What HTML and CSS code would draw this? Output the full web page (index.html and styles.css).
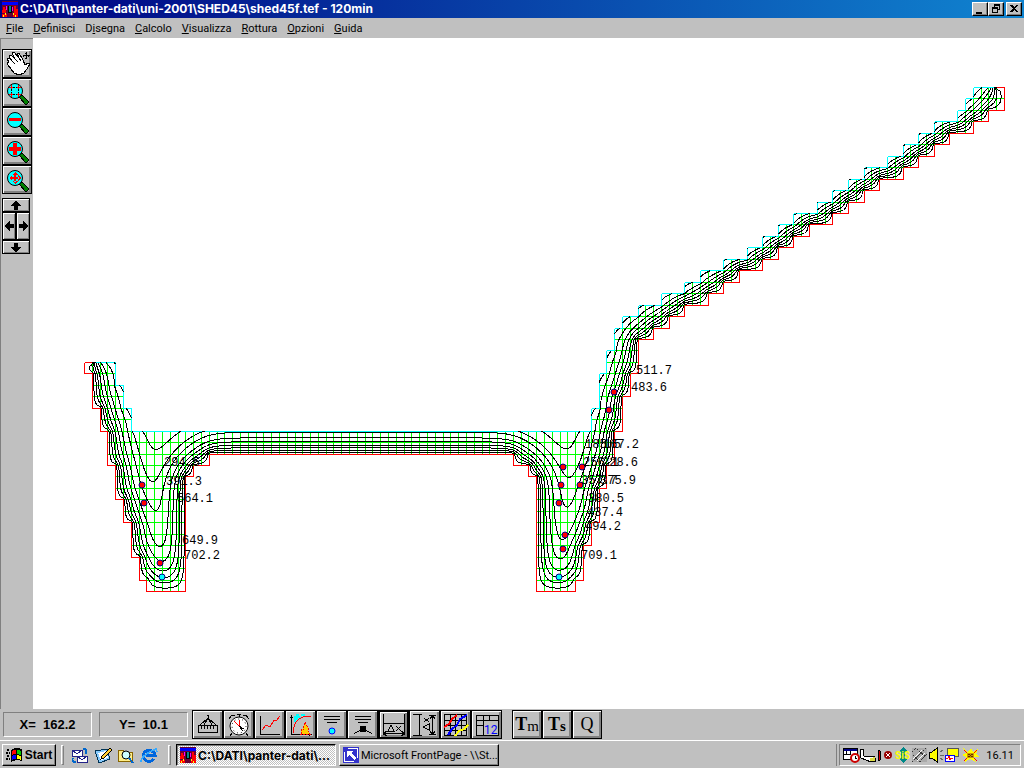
FILE: index.html
```html
<!DOCTYPE html>
<html lang="it">
<head>
  <meta charset="UTF-8">
  <title>shed45f.tef - 120min</title>
  <link rel="stylesheet" href="styles.css">
</head>
<body>

  <header class="titlebar">
    <svg class="app-icon" width="16" height="16" viewBox="0 0 16 16"><use href="#panter"/></svg>
    <h1>C:\DATI\panter-dati\uni-2001\SHED45\shed45f.tef - 120min</h1>
    <button class="win-btn" aria-label="Riduci"><svg width="14" height="12"><path d="M3 9h6v2H3z"/></svg></button>
    <button class="win-btn" aria-label="Ripristina"><svg width="14" height="12"><path d="M5 1h6v6H9V6h1V3H6v1H5zM3 4h6v6H3zM4 6v3h4V6z" fill-rule="evenodd"/></svg></button>
    <button class="win-btn close" aria-label="Chiudi"><svg width="14" height="12"><path d="M3 2h2l2 2 2-2h2L8 5.500 11 9H9L7 7 5 9H3l3-3.500z"/></svg></button>
  </header>

  <nav class="menubar">
    <a href="#"><u>F</u>ile</a>
    <a href="#"><u>D</u>efinisci</a>
    <a href="#">D<u>i</u>segna</a>
    <a href="#"><u>C</u>alcolo</a>
    <a href="#"><u>V</u>isualizza</a>
    <a href="#"><u>R</u>ottura</a>
    <a href="#"><u>O</u>pzioni</a>
    <a href="#"><u>G</u>uida</a>
  </nav>

  <main class="work">
    <aside class="tools">
      <button class="tool" aria-label="Sposta"><svg width="26" height="25" viewBox="0 0 26 25">
        <path d="M5 11L3 8l2-1 3 3-3-5 2-1 4 4-3-6 2-1 5 6-2-5 2 0 4 7 2 5 3-2 2 1-3 5-3 4-5 2-5-2-6-8-1-2z" fill="#fff" stroke="#000"/>
        <path d="M8 10l3 3M11 8l3 3M15 7l2 3" stroke="#000" fill="none"/>
        <path d="M22 1v7M18.500 4.500h7M21 2h2M21 7h2M19.500 3.500v2M24.500 3.500v2" stroke="#000"/></svg></button>
      <button class="tool" aria-label="Zoom finestra"><svg width="26" height="25" viewBox="0 0 26 25"><use href="#lens"/>
        <path d="M7.500 6v10M14.500 6v10M6 7.500h10M6 14.500h10" stroke="#000" stroke-dasharray="2 1"/><path d="M5 7.500h4M7.500 5v4M13 7.500h4M14.500 5v4M5 14.500h4M7.500 13v4M13 14.500h4M14.500 13v4" stroke="#f00"/></svg></button>
      <button class="tool" aria-label="Zoom meno"><svg width="26" height="25" viewBox="0 0 26 25"><use href="#lens"/><path d="M5 9h12v3H5z" fill="#f00"/></svg></button>
      <button class="tool" aria-label="Zoom piu"><svg width="26" height="25" viewBox="0 0 26 25"><use href="#lens"/><path d="M9 5h4v4h4v4h-4v4H9v-4H5V9h4z" fill="#f00"/></svg></button>
      <button class="tool" aria-label="Zoom tutto"><svg width="26" height="25" viewBox="0 0 26 25"><use href="#lens"/>
        <path d="M11 5l3 3H8zM11 17l3-3H8zM5 11l3-3v6zM17 11l-3-3v6zM10 7h2v3h3v2h-3v3h-2v-3H7v-2h3z" fill="#f00"/></svg></button>
      <div class="pad">
        <button class="wide" aria-label="Su"><svg width="12" height="9"><path d="M6 0l6 5H8v4H4V5H0z"/></svg></button>
        <button aria-label="Sinistra"><svg width="9" height="12"><path d="M0 6l5-6v4h4v4H5v4z"/></svg></button>
        <button aria-label="Destra"><svg width="9" height="12"><path d="M9 6L4 0v4H0v4h4v4z"/></svg></button>
        <button class="wide" aria-label="Giu"><svg width="12" height="9"><path d="M6 9L0 4h4V0h4v4h4z"/></svg></button>
      </div>
    </aside>
    <section class="sheet">
      <svg id="section" viewBox="33 38 991 671" preserveAspectRatio="xMinYMin meet">
        <path id="mesh" class="mesh"/>
        <path id="cold" class="cold"/>
        <path id="hot" class="hot"/>
        <path id="iso" class="iso"/>
        <g id="probes" class="probes"></g>
        <g id="labels" class="labels"></g>
      </svg>
    </section>
  </main>

  <footer class="status">
    <output class="coord">X=  162.2</output>
    <output class="coord">Y=  10.1</output>
    <div class="group">
      <button aria-label="Sezione"><svg width="24" height="24" viewBox="0 0 24 24"><path d="M2.500 12.500h19v7h-19zM4 12l8-7 8 7M12 2v3M8 12l4-7 4 7M11 2.500h2" class="ln"/><path d="M5.500 13v3M8.500 13v3M11.500 13v3M14.500 13v3M17.500 13v3" class="ln"/></svg></button>
      <button aria-label="Tempo"><svg width="24" height="24" viewBox="0 0 24 24"><path d="M2 6l3-4 3 1M22 6l-3-4-3 1M10 1.500h4M12 2v3M5 20l-2 3M19 20l2 3" class="ln"/><circle cx="12" cy="13" r="9" fill="#fff" stroke="#000"/><circle cx="12" cy="13" r="7" fill="none" stroke="#000" stroke-dasharray="1 3"/><path d="M7 8l5 5M12 7v6" stroke="#f00"/><path d="M12 13l4 5M12 13l5 3" class="ln"/></svg></button>
      <button aria-label="Grafico"><svg width="24" height="24" viewBox="0 0 24 24"><path d="M2.500 3v18.500H22" class="ln"/><path d="M4 17l4-5 4 2 4-7 2 1 4-5" fill="none" stroke="#f00"/></svg></button>
      <button aria-label="Curve"><svg width="24" height="24" viewBox="0 0 24 24"><path d="M2.500 2v19.500H23M1 4h3M20.500 20v3" class="ln"/><path d="M5 4h6M7 2h3M12 2h4M5 6h4M5 8h2M10 5h2" stroke="#0ff" stroke-width="2"/><path d="M4 20c1-12 6-17 18-17" fill="none" stroke="#f00"/><path d="M12 21l1-5 1 1 2-8 3 6 0 3 2 3z" fill="#fc0" stroke="#f00" stroke-dasharray="2 1"/></svg></button>
      <button aria-label="Punto"><svg width="24" height="24" viewBox="0 0 24 24"><path d="M4 3.500h16M4 6.500h16M7 9.500h10" class="ln"/><circle cx="12" cy="18" r="3" fill="#0ff" stroke="#00f"/></svg></button>
      <button aria-label="Nodo"><svg width="24" height="24" viewBox="0 0 24 24"><path d="M4 3.500h16M4 6.500h16M7 9.500h10M3 20.500l6-3M21 20.500l-6-3" class="ln"/><path d="M9 13h6v6H9z"/></svg></button>
      <button class="on" aria-label="Delta x"><svg width="24" height="24" viewBox="0 0 24 24"><path d="M1.500 1v21M22.500 1v21M1 10.500h22M2 20.500h20M2 20l3-2M2 21l3 2M22 20l-3-2M22 21l-3 2M6 18l3-6 3 6zM14 13l5 5M19 13l-5 5" class="ln"/></svg></button>
      <button aria-label="Delta y"><svg width="24" height="24" viewBox="0 0 24 24"><path d="M0 1.500h9M0 22.500h9M6.500 2v20M19.500 2v20M16 2.500h7M16 21.500h7M19 3l-2 3M20 3l2 3M19 21l-2-3M20 21l2-3M10 14l6-3v6zM11 5l5 4M16 5l-5 4" class="ln"/></svg></button>
      <button aria-label="Isoterme"><svg width="26" height="24" viewBox="0 0 26 24"><path d="M1.500 1.500h22v21h-22zM7.500 2v20M12.500 2v20M18.500 2v20M2 7.500h22M2 12.500h22M2 17.500h22" class="ln"/><path d="M1 14l5-3 3-5 5-4" fill="none" stroke="#f00" stroke-width="2"/><path d="M5 22l4-6 5-4 3-6 7-4" fill="none" stroke="#00f" stroke-width="2"/><path d="M12 23l4-5 5-2 4-4" fill="none" stroke="#ff0" stroke-width="2"/></svg></button>
      <button aria-label="Tabella"><svg width="24" height="24" viewBox="0 0 24 24"><path d="M1.500 2.500h22v20h-22zM8.500 3v20M2 7.500h22M14.500 3v5M2 12.500h7" class="ln"/><text x="9" y="21" class="num">12</text></svg></button>
    </div>
    <div class="group letters">
      <button><b>T</b><span>m</span></button>
      <button><b>T</b><b class="sub">s</b></button>
      <button>Q</button>
    </div>
  </footer>

  <div class="taskbar">
    <button class="start"><svg width="17" height="16" viewBox="0 0 17 16">
      <path d="M1 3h3M0 6h4M1 9h3M0 12h4" stroke="#000" stroke-width="2" stroke-dasharray="2 1"/>
      <path d="M5 3q3-3 11-1v12q-6-2-11 1z"/><path d="M6 4q2-1 4-1v4q-2 0-4 1z" fill="#f00"/><path d="M11 3q2 0 4 1v4l-4-1z" fill="#0c0"/><path d="M6 9q2-1 4-1v4q-2 0-4 1z" fill="#00f"/><path d="M11 8l4 1v4q-2-1-4-1z" fill="#ff0"/></svg>Start</button>
    <i class="grip"></i>
    <div class="quick">
      <a href="#" aria-label="Posta"><svg width="18" height="17" viewBox="0 0 18 17"><path d="M1 3h10v6H1zM6 9h10v6H6z" fill="#fff" stroke="#228"/><path d="M1 3l5 4 5-4M6 9l5 4 5-4" fill="none" stroke="#228"/><path d="M12 2q5 0 3 5M5 15q-5 0-3-4" fill="none" stroke="#06c" stroke-width="2"/></svg></a>
      <a href="#" aria-label="Desktop"><svg width="18" height="17" viewBox="0 0 18 17"><path d="M1 4l12-2 3 10-11 4z" fill="#8cf" stroke="#035"/><path d="M4 6l8-2 2 7-7 2z" fill="#fff"/><path d="M16 1l-8 8-1 3 3-1 8-8z" fill="#fc3" stroke="#000"/></svg></a>
      <a href="#" aria-label="Cerca"><svg width="18" height="17" viewBox="0 0 18 17"><path d="M1 3h5l1 2h8v9H1z" fill="#fe8" stroke="#860"/><circle cx="9" cy="8" r="4" fill="#cff" stroke="#000"/><path d="M12 11l4 5" stroke="#06c" stroke-width="2"/></svg></a>
      <a href="#" aria-label="Internet"><svg width="18" height="17" viewBox="0 0 18 17"><path d="M14 12a6 5.500 0 1 1 1-4H6" fill="none" stroke="#06d" stroke-width="3"/><path d="M1 15q0-7 15-13l1 3" fill="none" stroke="#3af" stroke-width="1.500"/></svg></a>
    </div>
    <i class="grip"></i>
    <button class="task active"><svg width="16" height="16" viewBox="0 0 16 16"><use href="#panter"/></svg><span>C:\DATI\panter-dati\...</span></button>
    <button class="task"><svg width="16" height="16" viewBox="0 0 16 16"><path d="M0 0h16v16H0z" fill="#33c"/><path d="M5 1.500h9.500V11M11 14.500H1.500V5" fill="none" stroke="#fff"/><path d="M4 4h6L8 6l5 5-2 2-5-5-2 2z" fill="#fff"/></svg><span>Microsoft FrontPage - \\St...</span></button>
    <i class="tray-line"></i>
    <div class="tray">
      <svg width="138" height="16" viewBox="0 0 138 16">
        <path d="M.5 1.500h14v11H.5z" fill="#fff" stroke="#000"/><path d="M1 2h13v2H1z" fill="#008"/><path d="M3 4v4M7 4v4M1 7h6" stroke="#000"/><circle cx="12" cy="11" r="4" fill="#fff" stroke="#c00" stroke-width="2"/><path d="M12 9v2h2" class="ln"/>
        <path d="M17 2l3 0 1 7 10 0 2 5-5 1-10-4z" fill="#fff" stroke="#000"/><path d="M27 11l5-1v4h-5z" fill="#dd4"/><path d="M35 3l2 1v9l-2 1z" fill="#c00" stroke="#000"/>
        <circle cx="45" cy="8" r="4" fill="#900"/><path d="M43 6l4 4M47 6l-4 4" stroke="#fff"/>
        <path d="M60 0l5 5h-3v6h3l-5 5-5-5h3V5h-3z" fill="#088"/><text x="52" y="12" class="sis">SiS</text>
        <path d="M69 1h15v14H69z" fill="#aaa"/><path d="M69 5l4-4M69 15L83 1M76 15l8-8M70 8l8 7M74 2l9 8" stroke="#333" stroke-dasharray="2 1"/><path d="M70 12l9-9M74 14l8-8" stroke="#fff"/>
        <path d="M86 5h3l5-4v14l-5-4h-3z" fill="#ff0" stroke="#000"/><path d="M97 5l3-2M97 8h4M97 11l3 2" stroke="#666"/>
        <path d="M104 1h11v8h-11z" fill="#ff0" stroke="#555"/><path d="M102 8h9v6h-9z" fill="#fff" stroke="#00f"/><path d="M103 11h2l1-2 1 4 1-2h2" fill="none" stroke="#f00"/>
        <path d="M120 1l4 4 4-4 2 4 5-3-2 5 3 3-5 0 2 5-6-3-5 3 1-5-4-2 4-2z" fill="#ff0"/><path d="M121 3l4 4M134 3l-4 4M121 14l4-4M134 14l-4-4" stroke="#f00"/><path d="M124 6h7v5h-7z" fill="#c90"/><path d="M125 7l5 3M130 7l-5 3" stroke="#630"/>
      </svg>
      <time>16.11</time>
    </div>
  </div>

  <svg class="defs" aria-hidden="true">
    <symbol id="panter" viewBox="0 0 16 16">
      <path d="M0 0h16v16H0z" fill="#603"/><path d="M0 1h16v3H0z" fill="#00f"/><path d="M1 6h2v2h1v4H0V9h1zM12 5h2v3h2v5h-4z" fill="#f00"/><path d="M4 5h1v4H4zM10 6h1v4h-1z" fill="#f0f"/><path d="M6 5h4v7H6z" fill="#000"/><path d="M7 5h2v6H7z" fill="#088"/><path d="M0 13h5v3H0zM11 13h5v3h-5z" fill="#f00"/><path d="M1 14h1v2H1zM3 12h1v2H3zM13 14h1v2h-1zM11 12h1v2h-1z" fill="#ff0"/>
    </symbol>
    <symbol id="lens" viewBox="0 0 26 25">
      <path d="M15 17l3-2 7 7-3 3z" fill="#008000" stroke="#000"/>
      <circle cx="11" cy="11" r="7.500" fill="#0ff" stroke="#000"/>
    </symbol>
  </svg>

  <script src="section.js"></script>
</body>
</html>
```
FILE: styles.css
```css
* {
  box-sizing: border-box;
}
body {
  margin: 0;
  height: 100vh;
  display: flex;
  flex-direction: column;
  overflow: hidden;
  background: #c0c0c0;
  color: #000;
  font-family: Roboto, "Liberation Sans", Arial, sans-serif;
  font-size: 11px;
}
button {
  margin: 0;
  padding: 0;
  border: 0;
  border-radius: 0;
  background: #c0c0c0;
  color: #000;
  font-family: inherit;
  font-size: inherit;
  display: flex;
  align-items: center;
  justify-content: center;
}
a {
  color: #000;
  text-decoration: none;
}
svg {
  display: block;
  flex: none;
  shape-rendering: crispEdges;
}
circle {
  shape-rendering: auto;
}
.defs {
  display: none;
}
.ln {
  fill: none;
  stroke: #000;
}

/* title and menu */
.titlebar {
  flex: none;
  height: 18px;
  display: flex;
  align-items: center;
  padding: 0 2px;
  background: linear-gradient(to right, #000080, #1084d0);
}
.titlebar h1 {
  flex: 1;
  margin: 0 0 0 2px;
  color: #fff;
  font-family: Inter, "Liberation Sans", sans-serif;
  font-size: 12px;
  line-height: 16px;
  white-space: pre;
}
.win-btn {
  width: 16px;
  height: 14px;
  border: 1px solid;
  border-color: #fff #000 #000 #fff;
  box-shadow: inset -1px -1px #808080;
}
.win-btn.close {
  margin-left: 2px;
}
.menubar {
  flex: none;
  height: 20px;
  display: flex;
  gap: 10px;
  padding-left: 6px;
  line-height: 21px;
  font-size: 11px;
}

/* work area */
.work {
  flex: 1;
  min-height: 0;
  display: flex;
}
.tools {
  width: 33px;
  flex: none;
  padding: 10px 0 0 1px;
  border-left: 1px solid #808080;
  border-top: 1px solid #808080;
}
.tool,
.group button {
  border: 1px solid #000;
  box-shadow: inset 1px 1px #fff, inset -1px -1px #808080, inset -2px -2px #808080;
}
.tool {
  width: 30px;
  height: 29px;
}
.pad {
  width: 28px;
  margin-top: 4px;
  display: grid;
  grid-template-columns: 1fr 1fr;
  grid-template-rows: 14px 28px 14px;
}
.pad button {
  border: 1px solid #000;
  box-shadow: inset 1px 1px #fff, inset -1px -1px #808080;
}
.pad .wide {
  grid-column: span 2;
}
.sheet {
  flex: 1;
  background: #fff;
}
.sheet svg {
  width: 100%;
  height: 100%;
}
.mesh,
.cold,
.hot,
.iso {
  fill: none;
  stroke-width: 1;
}
.mesh {
  stroke: #0f0;
}
.cold {
  stroke: #0ff;
}
.hot {
  stroke: #f00;
}
.iso {
  stroke: #000;
}
.probes circle {
  fill: #f00;
  stroke: #000080;
}
.probes .gas {
  fill: #0ff;
}
.labels {
  font-family: "Liberation Mono", "Courier New", monospace;
  font-size: 12px;
}

/* coordinates and lower buttons */
.status {
  flex: none;
  height: 31px;
  display: flex;
  align-items: center;
  padding-left: 3px;
}
.coord {
  width: 89px;
  height: 25px;
  margin-right: 7px;
  border: 1px solid;
  border-color: #808080 #fff #fff #808080;
  text-align: center;
  line-height: 23px;
  font-family: "Liberation Sans", Arial, sans-serif;
  font-size: 13px;
  font-weight: bold;
  white-space: pre;
}
.group {
  display: flex;
  margin-left: -3px;
}
.group button {
  width: 31px;
  height: 29px;
}
.group .on {
  border-width: 2px;
}
.num {
  fill: #00f;
  font-size: 12px;
}
.letters {
  margin-left: 10px;
  font-family: "Liberation Serif", "Times New Roman", serif;
  font-size: 18px;
}
.letters button {
  width: 30px;
}
.letters span,
.letters .sub {
  font-size: 15px;
  padding-top: 4px;
}

/* taskbar */
.taskbar {
  flex: none;
  height: 28px;
  display: flex;
  align-items: center;
  padding: 1px 3px 0 2px;
  border-top: 1px solid #fff;
}
.start,
.task {
  height: 22px;
  border: 1px solid;
  border-color: #fff #000 #000 #fff;
  box-shadow: inset -1px -1px #808080;
}
.start {
  width: 54px;
  gap: 2px;
  font-family: "Liberation Sans", Arial, sans-serif;
  font-weight: bold;
  font-size: 12px;
}
.grip {
  width: 3px;
  height: 20px;
  margin: 0 5px;
  border: 1px solid;
  border-color: #fff #808080 #808080 #fff;
}
.quick {
  display: flex;
  gap: 5px;
  margin: 0 5px 0 2px;
}
.task {
  width: 160px;
  margin-right: 3px;
  padding: 0 3px;
  gap: 2px;
  justify-content: flex-start;
  white-space: nowrap;
  overflow: hidden;
}
.task.active {
  border-color: #000 #fff #fff #000;
  box-shadow: inset 1px 1px #808080;
  background: repeating-conic-gradient(#fff 0 25%, #c0c0c0 0 50%) 0 0 / 2px 2px;
  font-family: Inter, "Liberation Sans", sans-serif;
  font-size: 12px;
  font-weight: bold;
}
.tray-line {
  width: 1px;
  height: 22px;
  margin: 0 2px 0 auto;
  background: #808080;
}
.tray {
  width: 182px;
  height: 22px;
  padding: 0 6px 0 3px;
  display: flex;
  align-items: center;
  justify-content: space-between;
  border: 1px solid;
  border-color: #808080 #fff #fff #808080;
}
.sis {
  fill: #ff0;
  font-size: 10px;
  font-weight: bold;
}
```
FILE: section.js
```js
// mesh pitch and origin
const DX = 920 / 118, DY = 504 / 44, X0 = 84, Y0 = 87;

// filled cells for each row, from the top: [first, last) pairs
const rows = [
  [114, 118], [113, 118], [112, 116], [109, 114], [107, 111], [105, 109],
  [103, 107], [100, 105], [98, 102], [96, 100], [94, 98], [91, 96],
  [89, 93], [87, 91], [85, 89], [82, 87], [79, 84], [77, 82],
  [74, 80], [71, 77], [69, 75], [68, 73], [68, 71], [67, 71],
  [0, 4, 67, 71], [1, 4, 66, 70], [1, 5, 66, 70], [1, 5, 66, 69],
  [2, 6, 65, 69], [2, 6, 65, 69],
  [3, 68], [3, 68],
  [3, 16, 55, 68], [4, 14, 57, 67], [4, 13, 58, 67], [4, 13, 58, 66],
  [5, 13, 58, 66], [5, 13, 58, 66], [6, 13, 58, 65], [6, 13, 58, 65],
  [6, 13, 58, 64], [7, 13, 58, 64], [7, 13, 58, 64], [8, 13, 58, 63]
];
const NX = 118, NY = rows.length;

function filled(i, j) {
  const r = rows[j];
  if (!r) return false;
  for (let k = 0; k < r.length; k += 2) {
    if (i >= r[k] && i < r[k + 1]) return true;
  }
  return false;
}

const px = i => Math.round(X0 + i * DX) + 0.5;
const py = j => Math.round(Y0 + j * DY) + 0.5;

// temperature nodes, S per cell side
const S = 3, W = NX * S + 1, H = NY * S + 1;
let temp = new Float32Array(W * H);
const inside = new Uint8Array(W * H);
const fire = new Uint8Array(W * H);
const air = new Uint8Array(W * H);

let mesh = "", cold = "", hot = "";

function mark(grid, i1, j1, i2, j2) {
  for (let k = 0; k <= S; k++) {
    grid[(j1 * S + (j2 - j1) * k) * W + i1 * S + (i2 - i1) * k] = 1;
  }
}

function edge(i1, j1, i2, j2, kind) {
  const d = `M${px(i1)} ${py(j1)}L${px(i2)} ${py(j2)}`;
  if (kind === "mesh") mesh += d;
  if (kind === "cold") {
    cold += d;
    mark(air, i1, j1, i2, j2);
  }
  if (kind === "hot") {
    hot += d;
    mark(fire, i1, j1, i2, j2);
  }
}

for (let j = 0; j < NY; j++) {
  for (let i = 0; i < NX; i++) {
    if (!filled(i, j)) continue;
    for (let b = 0; b <= S; b++) {
      for (let a = 0; a <= S; a++) inside[(j * S + b) * W + i * S + a] = 1;
    }
    const tip = i === 0 || i === 117;
    edge(i, j, i + 1, j, filled(i, j - 1) ? "mesh" : tip ? "hot" : "cold");
    edge(i, j, i, j + 1, filled(i - 1, j) ? "mesh" : i < 10 || j >= 30 ? "hot" : "cold");
    if (!filled(i, j + 1)) edge(i, j + 1, i + 1, j + 1, "hot");
    if (!filled(i + 1, j)) edge(i + 1, j, i + 1, j + 1, i > 60 || j >= 30 ? "hot" : "cold");
  }
}

// explicit heat conduction from the fire side, small loss to the air
const hx = DX / S, hy = DY / S, step = 2, loss = 0.05;
const cx = step / (hx * hx), cy = step / (hy * hy);
for (let n = 0; n < W * H; n++) temp[n] = fire[n];
for (let t = 0; t < 100; t++) {
  const next = temp.slice();
  for (let n = 0; n < W * H; n++) {
    if (!inside[n] || fire[n]) continue;
    const v = temp[n];
    let s = 0;
    if (inside[n - 1]) s += cx * (temp[n - 1] - v);
    if (inside[n + 1]) s += cx * (temp[n + 1] - v);
    if (n >= W && inside[n - W]) s += cy * (temp[n - W] - v);
    if (inside[n + W]) s += cy * (temp[n + W] - v);
    if (air[n]) s -= loss * v;
    next[n] = v + s;
  }
  temp = next;
}

// isotherms
const levels = [0.05, 0.16, 0.27, 0.42, 0.54, 0.66, 0.76, 0.85, 0.94];
let iso = "";
for (let j = 0; j < H - 1; j++) {
  for (let i = 0; i < W - 1; i++) {
    if (!filled(Math.floor(i / S), Math.floor(j / S))) continue;
    const c = [[i, j], [i + 1, j], [i + 1, j + 1], [i, j + 1]];
    const v = c.map(p => temp[p[1] * W + p[0]]);
    for (const l of levels) {
      const cut = [];
      for (let k = 0; k < 4; k++) {
        const m = (k + 1) % 4;
        if ((v[k] < l) !== (v[m] < l)) {
          const f = (l - v[k]) / (v[m] - v[k]);
          const x = X0 + 0.5 + (c[k][0] + f * (c[m][0] - c[k][0])) * hx;
          const y = Y0 + 0.5 + (c[k][1] + f * (c[m][1] - c[k][1])) * hy;
          cut.push(x.toFixed(2) + " " + y.toFixed(2));
        }
      }
      for (let k = 0; k + 1 < cut.length; k += 2) iso += `M${cut[k]}L${cut[k + 1]}`;
    }
  }
}

document.getElementById("mesh").setAttribute("d", mesh);
document.getElementById("cold").setAttribute("d", cold);
document.getElementById("hot").setAttribute("d", hot);
document.getElementById("iso").setAttribute("d", iso);

const probes = [
  [142, 485], [144, 503], [160, 563], [162, 577, "gas"],
  [563, 467], [582, 467], [561, 485], [580, 485], [559, 503],
  [565, 535], [563, 549], [559, 577, "gas"], [614, 392], [609, 410]
];
const labels = [
  [164, 466, "294.5"], [166, 485, "391.3"], [177, 502, "564.1"],
  [182, 544, "649.9"], [184, 559, "702.2"],
  [636, 374, "511.7"], [631, 391, "483.6"],
  [585, 448, "185.5"], [603, 448, "167.2"],
  [583, 466, "256.1"], [602, 466, "228.6"],
  [581, 484, "357.7"], [600, 484, "375.9"],
  [588, 502, "380.5"], [587, 516, "437.4"], [585, 530, "494.2"], [581, 559, "709.1"]
];
document.getElementById("probes").innerHTML = probes.map(p =>
  `<circle cx="${p[0]}" cy="${p[1]}" r="3" class="${p[2] || ""}"/>`).join("");
document.getElementById("labels").innerHTML = labels.map(l =>
  `<text x="${l[0]}" y="${l[1]}">${l[2]}</text>`).join("");
```
